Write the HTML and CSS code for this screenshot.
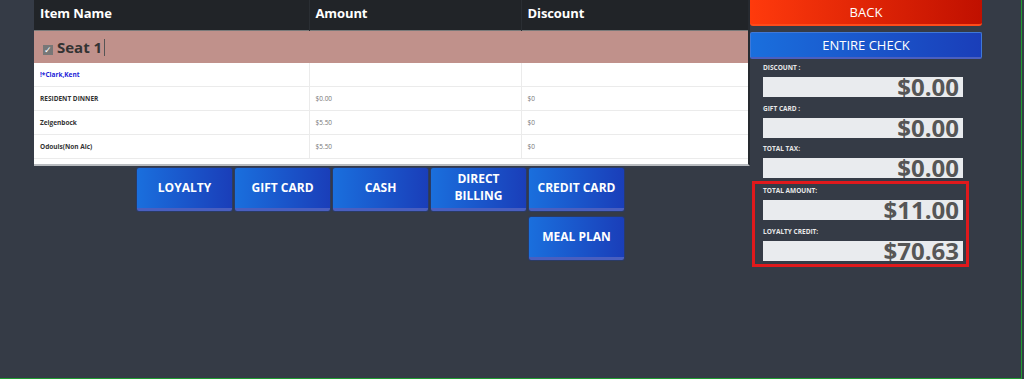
FILE: index.html
```html
<!DOCTYPE html>
<html lang="en">
<head>
    <meta charset="UTF-8">
    <meta name="viewport" content="width=device-width, initial-scale=1.0">
    <title>Payment</title>
    <link rel="stylesheet" href="styles.css">
</head>
<body>
    <div class="screen">
        <div class="left-side">
            <div class="check-box">
                <table class="check-table">
                    <colgroup>
                        <col class="col-name">
                        <col class="col-amount">
                        <col class="col-discount">
                    </colgroup>
                    <thead>
                        <tr>
                            <th>Item Name</th>
                            <th>Amount</th>
                            <th>Discount</th>
                        </tr>
                    </thead>
                    <tbody>
                        <tr class="seat-row">
                            <td colspan="3"><span class="seat-check">&#10003;</span><span class="seat-name">Seat 1</span><span class="caret"></span></td>
                        </tr>
                        <tr>
                            <td class="guest">!*Clark,Kent</td>
                            <td></td>
                            <td></td>
                        </tr>
                        <tr>
                            <td class="item">RESIDENT DINNER</td>
                            <td class="money">$0.00</td>
                            <td class="money">$0</td>
                        </tr>
                        <tr>
                            <td class="item">Zeigenbock</td>
                            <td class="money">$5.50</td>
                            <td class="money">$0</td>
                        </tr>
                        <tr>
                            <td class="item">Odouls(Non Alc)</td>
                            <td class="money">$5.50</td>
                            <td class="money">$0</td>
                        </tr>
                    </tbody>
                </table>
            </div>

            <div class="pay-buttons">
                <button class="pay-button">LOYALTY</button>
                <button class="pay-button">GIFT CARD</button>
                <button class="pay-button">CASH</button>
                <button class="pay-button">DIRECT<br>BILLING</button>
                <button class="pay-button">CREDIT CARD</button>
                <button class="pay-button meal-plan">MEAL PLAN</button>
            </div>
        </div>

        <div class="right-side">
            <button class="back-button">BACK</button>
            <button class="entire-button">ENTIRE CHECK</button>

            <div class="totals">
                <div class="total-item">
                    <p class="total-label">DISCOUNT :</p>
                    <div class="total-value">$0.00</div>
                </div>
                <div class="total-item">
                    <p class="total-label">GIFT CARD :</p>
                    <div class="total-value">$0.00</div>
                </div>
                <div class="total-item">
                    <p class="total-label">TOTAL TAX:</p>
                    <div class="total-value">$0.00</div>
                </div>
                <div class="highlight-box">
                    <div class="total-item">
                        <p class="total-label">TOTAL AMOUNT:</p>
                        <div class="total-value">$11.00</div>
                    </div>
                    <div class="total-item">
                        <p class="total-label">LOYALTY CREDIT:</p>
                        <div class="total-value">$70.63</div>
                    </div>
                </div>
            </div>
        </div>
    </div>
</body>
</html>
```

FILE: styles.css
```css
body {
    margin: 0;
    background-color: #353b46;
    font-family: 'Open Sans', 'Noto Sans', sans-serif;
    overflow: hidden;
}
.screen {
    display: flex;
    width: 987px;
    height: 378px;
    padding-left: 34px;
    border-right: 1px solid #1f9a30;
    border-bottom: 1px solid #1f9a30;
}
.left-side {
    width: 716px;
}
.check-box {
    width: 714px;
    background-color: #fff;
    padding-bottom: 5px;
    border-right: 2px solid #262a30;
    border-bottom: 2px solid #b9bcc0;
}
.check-table {
    width: 714px;
    border-collapse: collapse;
    table-layout: fixed;
}
.col-name {
    width: 275px;
}
.col-amount {
    width: 212px;
}
.col-discount {
    width: 227px;
}
.check-table th {
    height: 30px;
    padding: 0 6px;
    background-color: #212428;
    color: #fff;
    font-size: 13px;
    font-weight: bold;
    letter-spacing: -0.1px;
    text-align: left;
    vertical-align: top;
    line-height: 27px;
    border-left: 1px solid #2a2e33;
}
.check-table th:first-child {
    border-left: none;
}
.check-table td {
    height: 23px;
    padding: 0 6px;
    font-size: 6.5px;
    border-bottom: 1px solid #ebebeb;
    border-left: 1px solid #ebebeb;
}
.check-table td:first-child {
    border-left: none;
}
.check-table .seat-row td {
    height: 32px;
    padding: 0 9px;
    background-color: #c0918b;
    border-top: 1px solid #7a7a7a;
    border-bottom: none;
}
.seat-check {
    display: inline-block;
    width: 10px;
    height: 10px;
    margin-right: 4px;
    background-color: #777;
    color: #fff;
    font-size: 9px;
    line-height: 10px;
    text-align: center;
    vertical-align: 0;
}
.seat-name {
    font-size: 15px;
    font-weight: bold;
    color: #333;
}
.caret {
    display: inline-block;
    width: 1px;
    height: 17px;
    margin-left: 2px;
    background-color: #555;
    vertical-align: -3px;
}
.guest {
    color: #2323d8;
    font-weight: bold;
}
.item {
    color: #333;
    font-weight: bold;
}
.money {
    color: #777;
}
.pay-buttons {
    display: grid;
    grid-template-columns: repeat(5, 95px);
    gap: 6px 3px;
    margin: 2px 0 0 103px;
}
.pay-button {
    height: 43px;
    padding: 0 0 2px;
    border: none;
    border-bottom: 3px solid #4a5fc0;
    border-radius: 2px;
    background: linear-gradient(to right, #1a6fdd, #1a3eb9);
    box-shadow: 0 0 0 1px #2a3b66;
    color: #fff;
    font-family: 'Open Sans', sans-serif;
    font-size: 12px;
    font-weight: bold;
    line-height: 17px;
    cursor: pointer;
}
.meal-plan {
    grid-column: 5;
}
.right-side {
    width: 232px;
}
.back-button {
    display: block;
    width: 232px;
    height: 26px;
    border: none;
    border-bottom: 2px solid #ff4a1a;
    border-radius: 0 0 3px 3px;
    background: linear-gradient(to right, #ff3a0c, #c01000);
    color: #fff;
    font-family: 'Open Sans', sans-serif;
    font-size: 13px;
    cursor: pointer;
}
.entire-button {
    display: block;
    width: 232px;
    height: 27px;
    margin-top: 6px;
    border: 1px solid #3f78d8;
    border-bottom: 2px solid #4a5fc0;
    border-radius: 2px;
    background: linear-gradient(to right, #1a6fdd, #1a3eb9);
    color: #fff;
    font-family: 'Open Sans', sans-serif;
    font-size: 13px;
    cursor: pointer;
}
.totals {
    padding: 5px 0 0 13px;
}
.total-item {
    padding-bottom: 7.5px;
}
.total-label {
    height: 8px;
    margin: 0 0 5px;
    color: #e8e8e8;
    font-size: 6.5px;
    font-weight: bold;
    line-height: 8px;
}
.total-value {
    width: 196px;
    height: 20px;
    padding-right: 4px;
    background-color: #e9ebee;
    color: #565656;
    font-size: 24px;
    font-weight: bold;
    line-height: 20px;
    text-align: right;
}
.highlight-box {
    width: 201px;
    margin: -5px 0 0 -11px;
    padding: 3.5px 1.5px 0 8px;
    border: 3px solid #e0191c;
}
.highlight-box .total-item:last-child {
    padding-bottom: 3px;
}
```
